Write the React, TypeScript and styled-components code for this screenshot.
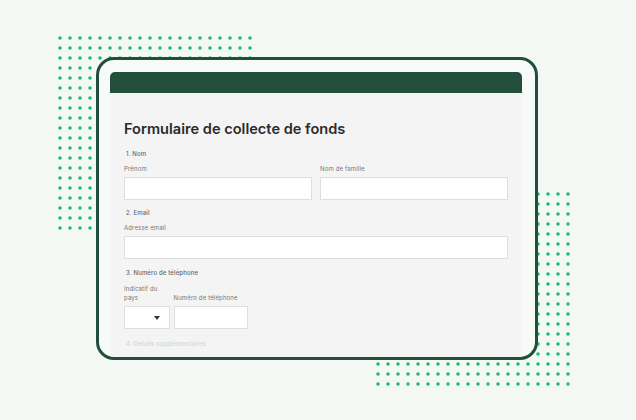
import React from "react";
import styled, { createGlobalStyle } from "styled-components";

const GlobalStyle = createGlobalStyle`
  html, body {
    margin: 0;
    padding: 0;
    background: #f3f8f5;
  }
  body {
    font-family: "Inter", "Open Sans", sans-serif;
  }
`;

const GREEN = "#224e3b";
const DOT = "#15b86e";

function Dots({ id }: { id: string }) {
  return (
    <svg width="200" height="200" viewBox="0 0 200 200">
      <defs>
        <pattern id={id} width="10" height="10" patternUnits="userSpaceOnUse">
          <circle cx="5" cy="5" r="1.75" fill={DOT} />
        </pattern>
      </defs>
      <rect width="200" height="200" fill={`url(#${id})`} />
    </svg>
  );
}

export default function App() {
  return (
    <Stage>
      <GlobalStyle />
      <DotsLayer $left={55} $top={33}>
        <Dots id="dots-a" />
      </DotsLayer>
      <DotsLayer $left={373} $top={189}>
        <Dots id="dots-b" />
      </DotsLayer>

      <Frame>
        <Card>
          <CardHeader />
          <CardBody>
            <Title>Formulaire de collecte de fonds</Title>

            <Question>1. Nom</Question>
            <TwoCols>
              <Field>
                <Label>Prénom</Label>
                <Input />
              </Field>
              <Field>
                <Label>Nom de famille</Label>
                <Input />
              </Field>
            </TwoCols>

            <Question $gap={8}>2. Email</Question>
            <Field>
              <Label>Adresse email</Label>
              <Input />
            </Field>

            <Question $gap={9}>3. Numéro de téléphone</Question>
            <PhoneRow>
              <Field $width={46}>
                <Label>
                  Indicatif du
                  <br />
                  pays
                </Label>
                <Select>
                  <Caret />
                </Select>
              </Field>
              <Field $width={74}>
                <Label>Numéro de téléphone</Label>
                <Input />
              </Field>
            </PhoneRow>

            <Question $gap={9.5} $faded>
              4. Détails supplémentaires
            </Question>
          </CardBody>
        </Card>
      </Frame>
    </Stage>
  );
}

const Stage = styled.div`
  position: relative;
  width: 636px;
  height: 420px;
  padding: 57px 0 0 96px;
  box-sizing: border-box;
  overflow: hidden;
`;

const DotsLayer = styled.div<{ $left: number; $top: number }>`
  position: absolute;
  left: ${(p) => p.$left}px;
  top: ${(p) => p.$top}px;
  width: 200px;
  height: 200px;
  line-height: 0;
`;

const Frame = styled.div`
  position: relative;
  z-index: 1;
  width: 442px;
  height: 303px;
  box-sizing: border-box;
  border: 3px solid ${GREEN};
  border-radius: 18px;
  background: #f6faf8;
  padding: 12px 13px 0 11px;
  overflow: hidden;
`;

const Card = styled.div`
  height: 320px;
  background: #f4f4f4;
  border-radius: 5px 5px 0 0;
  overflow: hidden;
`;

const CardHeader = styled.div`
  height: 21px;
  background: ${GREEN};
`;

const CardBody = styled.div`
  padding: 27px 14px 0 14px;
  display: flex;
  flex-direction: column;
`;

const Title = styled.div`
  font-size: 14.6px;
  line-height: 18px;
  font-weight: 600;
  color: #2b2b2b;
`;

const Question = styled.div<{ $gap?: number; $faded?: boolean }>`
  margin-top: ${(p) => p.$gap ?? 11}px;
  padding-left: 2px;
  font-size: 6px;
  line-height: 10px;
  letter-spacing: 0.15px;
  font-weight: 500;
  color: ${(p) => (p.$faded ? "#d4d4d4" : "#666")};
`;

const TwoCols = styled.div`
  display: grid;
  grid-template-columns: 1fr 1fr;
  gap: 8px;
`;

const Field = styled.div<{ $width?: number }>`
  display: flex;
  flex-direction: column;
  justify-content: flex-end;
  ${(p) => (p.$width ? `width: ${p.$width}px;` : "")}
`;

const Label = styled.div`
  margin-top: 5.5px;
  margin-bottom: 4px;
  font-size: 6px;
  line-height: 8.5px;
  letter-spacing: 0.15px;
  color: #777;
`;

const Input = styled.div`
  height: 23px;
  box-sizing: border-box;
  background: #fff;
  border: 1px solid #dedede;
`;

const PhoneRow = styled.div`
  margin-top: 1.5px;
  display: flex;
  align-items: flex-end;
  gap: 3.5px;
`;

const Select = styled(Input)`
  display: flex;
  align-items: center;
  justify-content: flex-end;
  padding-right: 9px;
`;

const Caret = styled.div`
  width: 0;
  height: 0;
  border-left: 3.5px solid transparent;
  border-right: 3.5px solid transparent;
  border-top: 4px solid #333;
`;
